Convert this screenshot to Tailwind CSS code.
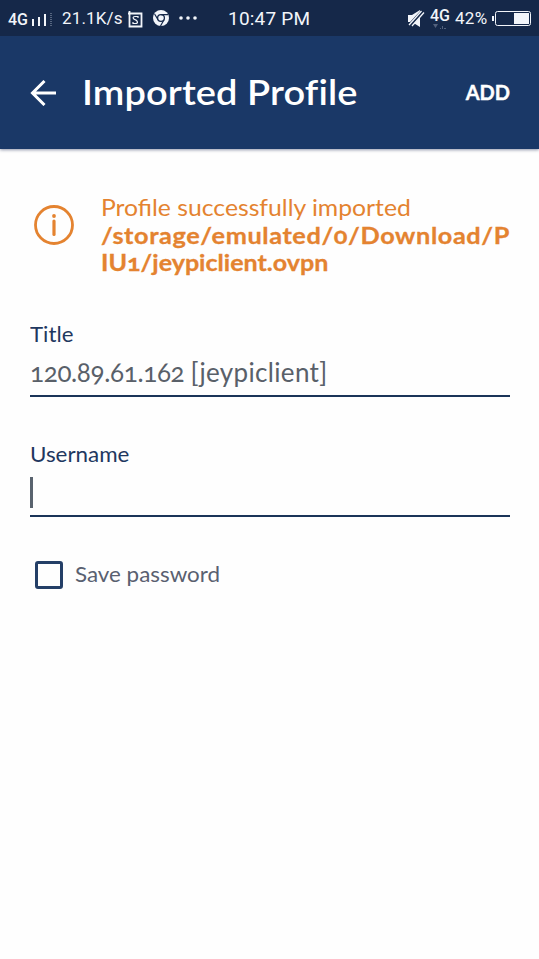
<!DOCTYPE html>
<html lang="en">
<head>
<meta charset="utf-8">
<title>Imported Profile</title>
<script src="https://cdn.jsdelivr.net/npm/@tailwindcss/browser@4"></script>
</head>
<body class="w-[539px] h-[959px] overflow-hidden bg-[#fefefe] font-['Lato','Open_Sans',sans-serif] oldstyle-nums">
<header class="bg-[#1a3867] text-white shadow-[0_1px_3px_rgba(40,50,90,0.5)]">
  <div class="h-9 bg-[#152849] font-[Roboto,sans-serif] lining-nums whitespace-nowrap text-[#f2f5fa]">
    <div class="flex h-full items-center pl-2">
      <span class="mt-1 w-[21px] text-[16px] font-medium leading-5">4G</span>
      <svg class="ml-[2px] mt-[5px] h-[15px] w-[22px]" viewBox="0 0 22 15" fill="currentColor"><path d="M1 6h2v7H1zM7 4h2v9H7zM13 1h2v12h-2z"/><path d="M20 0v13" stroke="#566680" stroke-width="2" stroke-dasharray="1 1"/></svg>
      <span class="ml-[9px] w-[62px] text-[17px] leading-5 tracking-[0.15px]">21.1K/s</span>
      <svg class="ml-[4px] mt-[2px] h-[17px] w-[15px] shrink-0" viewBox="0 0 15 17" fill="none" stroke="currentColor"><path d="M1.500 0v15.500h12v-13H0" stroke-width="1.800"/><path d="M10 7V5.500H7C4.500 5.500 4.500 8 7 8.700s3.800 3.800.5 3.800H5V11" stroke-width="1.200"/></svg>
      <svg class="ml-[10px] h-4 w-4" viewBox="0 0 16 16"><circle cx="8" cy="8" r="8" fill="currentColor"/><circle cx="8" cy="8" r="3.400" fill="none" stroke="#152849" stroke-width="1.300"/><path d="M8 4.600h7M5 9.700L1.600 4M11 9.700L7.500 16" stroke="#152849" stroke-width="1.200"/></svg>
      <svg class="ml-[10px] h-1 w-[18px]" viewBox="0 0 18 4" fill="currentColor"><circle cx="2" cy="2" r="1.800"/><circle cx="9" cy="2" r="1.800"/><circle cx="16" cy="2" r="1.800"/></svg>
      <span class="ml-[31px] mt-px w-[84px] text-[19px] leading-5 tracking-[0.2px]">10:47 PM</span>
      <svg class="ml-[96px] h-[17px] w-[17px]" viewBox="0 0 17 17"><path d="M0 5h4l8-5v17l-8-5H0z" fill="currentColor"/><path d="M1 16L15 1" stroke="#152849" stroke-width="4"/><path d="M1 15L13.500 1M4 16L16 2.500" stroke="currentColor" stroke-width="1.300"/></svg>
      <div class="ml-[5px] flex h-full w-[21px] flex-col pt-[7px]">
        <span class="text-[16px] font-medium leading-[18px]">4G</span>
        <svg class="-mt-px ml-[3px] h-[5px] w-[14px]" viewBox="0 0 14 5" fill="#52617d"><path d="M0 0h5L2.500 4zM7 4h1v1H7zM9 2h1v3H9zM11 4h2v1h-2z"/></svg>
      </div>
      <span class="ml-[4px] w-[34px] text-[17px] leading-5 tracking-[0.3px]">42%</span>
      <svg class="ml-[3px] h-[16px] w-[40px]" viewBox="0 0 40 16"><path d="M0 6h2v5H0z" fill="currentColor"/><rect x="3.500" y="1.500" width="35" height="14" rx="2" fill="none" stroke="currentColor"/><path d="M22 3h15v11H22z" fill="currentColor"/></svg>
    </div>
  </div>
  <div class="flex h-[113px] items-center pl-[30px] pr-[29px]">
    <svg class="h-[26px] w-[26px]" viewBox="0 0 26 26" fill="none" stroke="currentColor" stroke-width="3"><path d="M14.500 1L2.500 13l12 12M2.500 13H26"/></svg>
    <h1 class="-mt-[3px] ml-[26px] origin-left scale-x-[1.085] whitespace-nowrap text-[35px] font-semibold leading-10 tracking-[0.1px]">Imported Profile</h1>
    <button class="-mt-[2px] ml-auto whitespace-nowrap text-[20px] font-bold leading-6 [-webkit-text-stroke:0.4px_currentColor]">ADD</button>
  </div>
</header>
<main class="pl-[30px] pr-[29px] pt-[45px]">
  <section class="flex text-[#e48330]">
    <svg class="ml-1 mt-[11px] h-10 w-10 shrink-0" viewBox="0 0 40 40" fill="none" stroke="currentColor"><circle cx="20" cy="20" r="18.500" stroke-width="2.800"/><path d="M20 16v13.500" stroke-width="3.200" stroke-linecap="round"/><circle cx="20" cy="11" r="1.900" fill="currentColor" stroke="none"/></svg>
    <div class="ml-[27px] whitespace-nowrap text-[23px] leading-[27.500px]">
      <p class="origin-left scale-x-[1.075]">Profile successfully imported</p>
      <p class="origin-left scale-x-[1.1] font-bold tracking-[0.55px] [-webkit-text-stroke:0.3px_currentColor]">/storage/emulated/0/Download/P</p>
      <p class="origin-left scale-x-[1.09] font-bold [-webkit-text-stroke:0.3px_currentColor]">IU1/jeypiclient.ovpn</p>
    </div>
  </section>
  <section class="mt-[45px] h-[75px] border-b-2 border-[#1a3458]">
    <label class="block origin-left scale-x-[1.06] text-[21px] leading-6 text-[#1f3860]">Title</label>
    <div class="mt-[10px] whitespace-nowrap text-[26px] leading-[32px] text-[#596069]"><span class="tracking-[-0.35px]">120.89.61.162 </span><span class="tracking-[0.35px]">[jeypiclient]</span></div>
  </section>
  <section class="mt-[45px] h-[75px] border-b-2 border-[#1a3458]">
    <label class="block origin-left scale-x-[1.065] text-[21px] leading-6 text-[#1f3860]">Username</label>
    <div class="mt-[11px] h-[31px] w-[3px] bg-[#59636e]"></div>
  </section>
  <label class="mt-[43px] flex items-center">
    <span class="ml-[5px] mt-px block h-7 w-7 rounded-[3px] border-3 border-[#243f67]"></span>
    <span class="ml-3 origin-left scale-x-[1.065] whitespace-nowrap text-[21px] leading-6 text-[#596070]">Save password</span>
  </label>
</main>
</body>
</html>
